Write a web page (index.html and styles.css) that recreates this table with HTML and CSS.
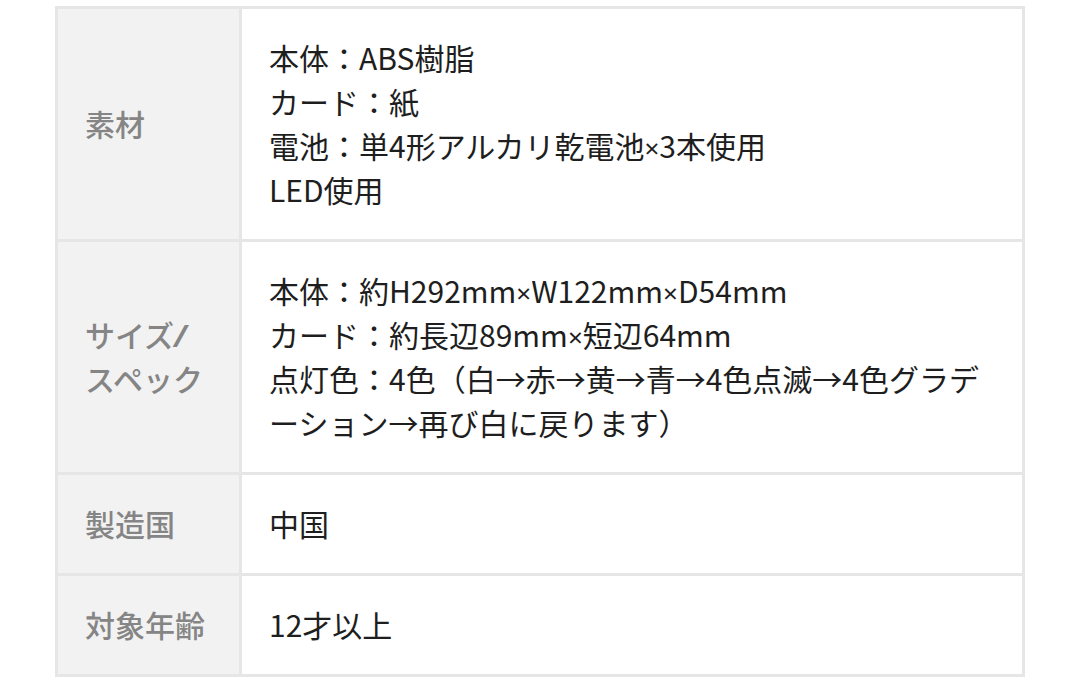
FILE: index.html
```html
<!DOCTYPE html>
<html lang="ja">
<head>
<meta charset="utf-8">
<link rel="stylesheet" href="styles.css">
</head>
<body>
<table class="spec">
  <colgroup><col class="col-head"><col></colgroup>
  <tbody>
    <tr>
      <th>素材</th>
      <td>本体：ABS樹脂<br>カード：紙<br>電池：単4形アルカリ乾電池<span class="lat">×</span>3本使用<br>LED使用</td>
    </tr>
    <tr>
      <th>サイズ<span class="slash">/</span><br>スペック</th>
      <td>本体：約H292mm<span class="lat">×</span>W122mm<span class="lat">×</span>D54mm<br>カード：約長辺89mm<span class="lat">×</span>短辺64mm<br>点灯色：4色（白→赤→黄→青→4色点滅→4色グラデーション→再び白に戻ります）</td>
    </tr>
    <tr>
      <th>製造国</th>
      <td>中国</td>
    </tr>
    <tr>
      <th>対象年齢</th>
      <td>12才以上</td>
    </tr>
  </tbody>
</table>
</body>
</html>
```
FILE: styles.css
```css
html, body {
  margin: 0;
  padding: 0;
  background: #ffffff;
}
body {
  padding: 6px 55px 0 55px;
  font-family: "Noto Sans CJK JP", "Noto Sans", sans-serif;
}
.spec {
  width: 100%;
  border-collapse: collapse;
  table-layout: fixed;
  font-size: 30px;
  line-height: 44px;
}
.col-head {
  width: 184px;
}
.spec th,
.spec td {
  border: 3px solid #e6e6e6;
  padding: 26px 27px 28px 27px;
  vertical-align: middle;
  text-align: left;
}
.spec th {
  background: #f2f2f2;
  color: #858585;
  font-weight: 500;
}
.spec td {
  background: #ffffff;
  color: #1e1e1e;
  font-weight: 400;
}
.lat {
  font-family: "Noto Sans", sans-serif;
  font-size: 26px;
  line-height: 1;
}
.slash {
  font-family: "Noto Sans", sans-serif;
  font-weight: 700;
  font-style: italic;
  line-height: 1;
}
```
